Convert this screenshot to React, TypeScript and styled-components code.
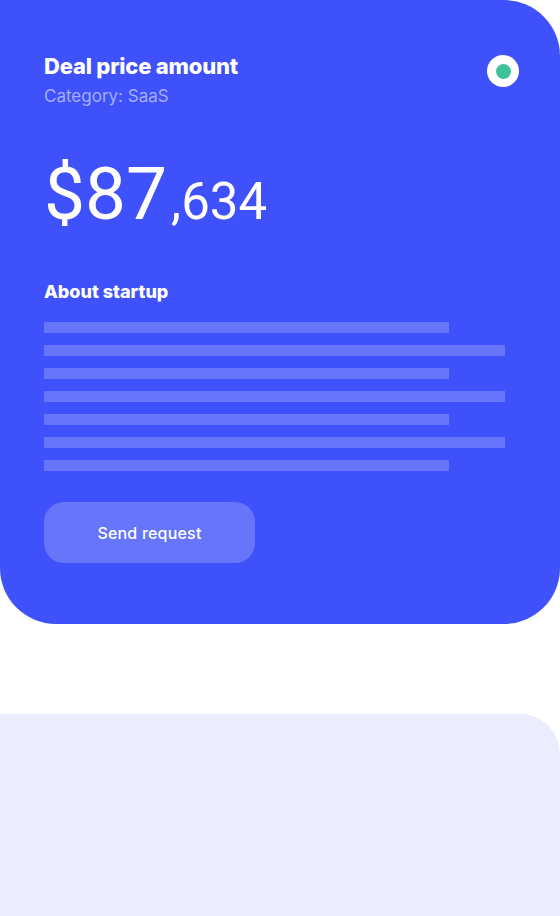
import styled, { createGlobalStyle } from "styled-components";

const GlobalStyle = createGlobalStyle`
  body {
    margin: 0;
    background: #ffffff;
    font-family: Inter, "Liberation Sans", sans-serif;
  }
`;

const Page = styled.div({
    display: "flex",
    flexDirection: "column",
    width: "560px",
    height: "916px",
    overflow: "hidden",
});

const DealCard = styled.div({
    background: "#3F51FA",
    borderRadius: "0 56px 56px 56px",
    height: "624px",
    boxSizing: "border-box",
    padding: "53px 40px 0 44px",
    display: "flex",
    flexDirection: "column",
    flexShrink: 0,
});

const Header = styled.div({
    display: "flex",
    justifyContent: "space-between",
    alignItems: "flex-start",
});

const Title = styled.h1({
    margin: 0,
    fontSize: "22px",
    lineHeight: "27px",
    fontWeight: 800,
    color: "#ffffff",
    letterSpacing: "-0.2px",
});

const Category = styled.div({
    fontSize: "17px",
    lineHeight: "20px",
    color: "#A4AEFC",
    marginTop: "6px",
});

const StatusDot = styled.div({
    width: "32px",
    height: "32px",
    borderRadius: "50%",
    background: "#ffffff",
    display: "flex",
    alignItems: "center",
    justifyContent: "center",
    marginTop: "2px",
    marginRight: "1px",
    "&::after": {
        content: '""',
        width: "15px",
        height: "15px",
        borderRadius: "50%",
        background: "#3DC29B",
    },
});

const Price = styled.div({
    marginTop: "52px",
    fontFamily: "Roboto, sans-serif",
    color: "#ffffff",
    display: "flex",
    alignItems: "baseline",
    lineHeight: 1,
});

const PriceMain = styled.span({
    fontSize: "73px",
});

const PriceCents = styled.span({
    fontSize: "51px",
    marginLeft: "4px",
});

const SectionTitle = styled.h2({
    margin: "50px 0 0",
    fontSize: "18px",
    lineHeight: "22px",
    fontWeight: 800,
    color: "#ffffff",
});

const Lines = styled.div({
    marginTop: "19px",
    display: "flex",
    flexDirection: "column",
    gap: "12px",
});

const Line = styled.div<{ $long?: boolean }>(props => ({
    height: "11px",
    width: props.$long ? "461px" : "405px",
    background: "#6675F9",
}));

const SendButton = styled.button({
    marginTop: "31px",
    width: "211px",
    height: "61px",
    border: "none",
    borderRadius: "20px",
    background: "#6675F9",
    color: "#ffffff",
    fontFamily: "Inter, sans-serif",
    fontSize: "16px",
    fontWeight: 500,
    letterSpacing: "0.2px",
    cursor: "pointer",
});

const NextCard = styled.div({
    marginTop: "90px",
    flex: 1,
    background: "#EBECFE",
    borderRadius: "0 40px 0 0",
});

const lines = [false, true, false, true, false, true, false];

export default function App() {
    return (
        <Page>
            <GlobalStyle />
            <DealCard>
                <Header>
                    <div>
                        <Title>Deal price amount</Title>
                        <Category>Category: SaaS</Category>
                    </div>
                    <StatusDot />
                </Header>
                <Price>
                    <PriceMain>$87</PriceMain>
                    <PriceCents>,634</PriceCents>
                </Price>
                <SectionTitle>About startup</SectionTitle>
                <Lines>
                    {lines.map((isLong, i) => (
                        <Line key={i} $long={isLong} />
                    ))}
                </Lines>
                <div>
                    <SendButton>Send request</SendButton>
                </div>
            </DealCard>
            <NextCard />
        </Page>
    );
}
